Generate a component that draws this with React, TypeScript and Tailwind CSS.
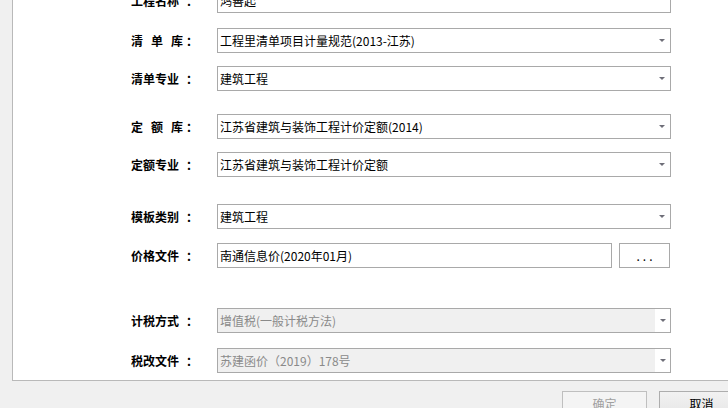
import React from 'react';

const font = { fontFamily: '"Noto Sans CJK SC", "Liberation Sans", sans-serif' };

const Arrow: React.FC<{ className?: string }> = ({ className }) => (
  <svg width="6" height="3" viewBox="0 0 6 3" className={className}>
    <polygon points="0,0 6,0 3,3" fill="#6e6e78" />
  </svg>
);

const Label: React.FC<{ text: string; spaced?: boolean }> = ({ text, spaced }) => (
  <div className="w-[86px] h-full flex items-center ml-[118px] font-bold text-[12px] text-black">
    <span className={`flex w-[55px] ${spaced ? 'gap-[8px]' : ''}`}>
      {text.split('').map((c, i) => (
        <span key={i}>{c}</span>
      ))}
    </span>
    <span>：</span>
  </div>
);

type Field = {
  label: string;
  spaced?: boolean;
  value: string;
  kind: 'input' | 'select' | 'disabled' | 'file';
  mt: string;
};

const fields: Field[] = [
  { label: '工程名称', value: '鸿善起', kind: 'input', mt: 'mt-[-12px]' },
  { label: '清单库', spaced: true, value: '工程里清单项目计量规范(2013-江苏)', kind: 'select', mt: 'mt-[15px]' },
  { label: '清单专业', value: '建筑工程', kind: 'select', mt: 'mt-[13px]' },
  { label: '定额库', spaced: true, value: '江苏省建筑与装饰工程计价定额(2014)', kind: 'select', mt: 'mt-[23px]' },
  { label: '定额专业', value: '江苏省建筑与装饰工程计价定额', kind: 'select', mt: 'mt-[13px]' },
  { label: '模板类别', value: '建筑工程', kind: 'select', mt: 'mt-[27px]' },
  { label: '价格文件', value: '南通信息价(2020年01月)', kind: 'file', mt: 'mt-[14px]' },
  { label: '计税方式', value: '增值税(一般计税方法)', kind: 'disabled', mt: 'mt-[40px]' },
  { label: '税改文件', value: '苏建函价（2019）178号', kind: 'disabled', mt: 'mt-[15px]' },
];

const Control: React.FC<{ f: Field }> = ({ f }) => {
  if (f.kind === 'file') {
    return (
      <div className="flex h-full">
        <div className="w-[395px] h-full border border-[#a9a9a9] bg-white flex items-center pl-[2px] text-[12px] text-black">
          {f.value}
        </div>
        <div className="ml-[7px] w-[51px] h-full border border-[#a9a9a9] bg-white flex items-center justify-center text-[12px] text-black tracking-[3px] pl-[3px]">
          ...
        </div>
      </div>
    );
  }
  if (f.kind === 'disabled') {
    return (
      <div className="w-[454px] h-full border border-[#a9a9a9] flex">
        <div className="flex-1 bg-[#f0f0f0] flex items-center pl-[2px] text-[12px] text-[#8a8a8a]">{f.value}</div>
        <div className="w-[15px] bg-white flex items-center justify-center">
          <Arrow />
        </div>
      </div>
    );
  }
  return (
    <div className="w-[454px] h-full border border-[#a9a9a9] bg-white flex items-center pl-[2px] text-[12px] text-black">
      <span className="flex-1">{f.value}</span>
      {f.kind === 'select' && <Arrow className="mr-[5px]" />}
    </div>
  );
};

export default function App() {
  return (
    <div className="w-[728px] h-[408px] bg-[#f0f0f0] overflow-hidden" style={font}>
      <div className="ml-[12px] h-[381px] bg-white border-l border-b border-[#b9b9b9] overflow-hidden">
        {fields.map((f) => (
          <div key={f.label} className={`flex h-[25px] ${f.mt}`}>
            <Label text={f.label} spaced={f.spaced} />
            <Control f={f} />
          </div>
        ))}
      </div>
      <div className="flex gap-[12px] ml-[562px] mt-[10px] w-[200px]">
        <div className="w-[85px] h-[26px] shrink-0 border border-[#bfbfbf] bg-[#f4f4f4] flex items-center justify-center text-[12px] text-[#a0a0a0]">
          确定
        </div>
        <div className="w-[85px] h-[26px] shrink-0 border border-[#adadad] bg-gradient-to-b from-[#f2f2f2] to-[#e6e6e6] flex items-center justify-center text-[12px] text-black">
          取消
        </div>
      </div>
    </div>
  );
}
